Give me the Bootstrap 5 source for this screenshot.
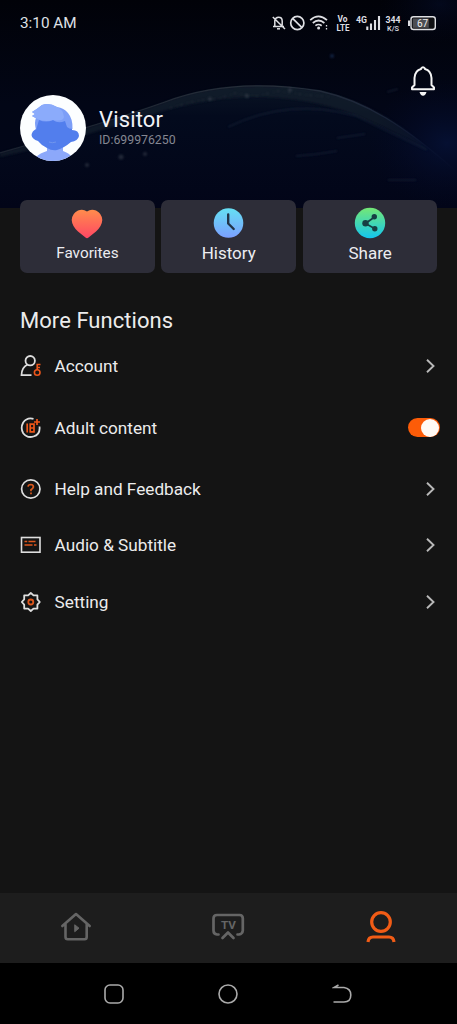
<!DOCTYPE html>
<html lang="en">
<head>
<meta charset="utf-8">
<meta name="viewport" content="width=device-width, initial-scale=1">
<title>Profile</title>
<link rel="stylesheet" href="https://cdn.jsdelivr.net/npm/bootstrap@5.3.0/dist/css/bootstrap.min.css">
<style>
body{background:#141414;color:#ececec;font-family:Roboto,sans-serif;height:1024px;overflow:hidden;line-height:1.2}
svg{display:block;flex:none}
.hero{height:208px;background:#020512}
.hero-art{position:absolute;inset:0}
.hero-body{position:relative}
.status{height:46px;padding:0 20px}
.status-icons{margin-right:-18px}
.clock{font-size:15.3px;color:#dfe0e6;padding-top:1px}
.profile{padding:49px 20px 0}
.who{margin:-1px 0 0 13px}
.visitor{font-size:22px;line-height:26px;letter-spacing:.15px;color:#f2f3f7}
.uid{font-size:12.3px;line-height:15px;letter-spacing:0;color:#858792}
.bell{margin-top:-95px}
.tiles{position:relative;margin-top:-8.5px;padding:0 19.5px 0 20px;gap:6.6px}
.tile{flex:1 1 0;height:73.5px;background:#2d2d38;border-radius:7px;color:#ececf0;font-size:17px;padding-top:7.5px}
.tile-small{font-size:15.3px}
.tile-label{line-height:20px;margin-top:3.5px}
.section-title{font-size:22px;line-height:28px;margin:34px 0 0 20px;letter-spacing:.05px;font-weight:400}
.menu{margin-top:3px}
.menu-row{height:56.5px;padding:0 20px 0 20px;font-size:17.2px}
.menu-row.tall{height:66px}
.menu-label{margin-left:12.6px;padding-top:1px}
.toggle{width:32px;height:19.5px;border-radius:10px;background:#fc5c08;margin-right:-3px;padding:.75px}
.knob{width:18px;height:18px;border-radius:50%;background:#fffaf5}
.tabs{height:70px;background:#1d1d1d}
.sysnav{height:61px;background:#000;gap:94px;padding-right:1px}
</style>
</head>
<body class="d-flex flex-column">
<header class="hero position-relative flex-shrink-0">
<svg class="hero-art" width="457" height="208" viewBox="0 0 457 208">
<defs>
<linearGradient id="sky" x1="0" y1="0" x2="0" y2="1"><stop offset="0" stop-color="#010208"/><stop offset=".5" stop-color="#020616"/><stop offset="1" stop-color="#02061a"/></linearGradient>
<radialGradient id="glow"><stop offset="0" stop-color="#061238" stop-opacity=".8"/><stop offset="1" stop-color="#030824" stop-opacity="0"/></radialGradient>
<linearGradient id="globe" x1="0" y1="0" x2="0" y2="1"><stop offset="0" stop-color="#0a1424"/><stop offset=".25" stop-color="#030a1d"/><stop offset="1" stop-color="#020518"/></linearGradient>
<linearGradient id="rim" x1="0" y1="0" x2="1" y2="0"><stop offset="0" stop-color="#1b2230"/><stop offset=".6" stop-color="#272f3a"/><stop offset=".85" stop-color="#1a253a"/><stop offset="1" stop-color="#1c2840" stop-opacity="0"/></linearGradient>
<filter id="soft"><feGaussianBlur stdDeviation="1"/></filter>
</defs>
<rect width="457" height="208" fill="url(#sky)"/>
<ellipse cx="440" cy="4" rx="60" ry="38" fill="url(#glow)" opacity=".5"/>
<path d="M0 153C70 133 120 118 165 102C215 83 270 83 320 91C365 101 405 126 457 172V208H0Z" fill="url(#globe)"/>
<path d="M0 153C70 133 120 118 165 102C215 83 270 83 320 91C365 101 400 122 430 151C390 130 350 110 315 103C255 91 210 99 170 109C110 127 60 144 0 157Z" fill="#19212d" opacity=".6" filter="url(#soft)"/>
<path d="M0 153C70 133 120 118 165 102C215 83 270 83 320 91C365 101 405 126 457 172" fill="none" stroke="url(#rim)" stroke-width="1.3"/>
<ellipse cx="447" cy="143" rx="78" ry="65" fill="url(#glow)"/>
<g fill="none" stroke="#263247" stroke-width=".9" opacity=".8" filter="url(#soft)"><path d="M228 127Q290 97 356 116L427 150"/><path d="M296 156Q315 155 337 151M388 180H416M337 138L365 134M387 92L398 89"/></g>
<g fill="#49515c" opacity=".45" filter="url(#soft)"><circle cx="121" cy="157" r="2.5"/><circle cx="145" cy="154" r="2"/><circle cx="87" cy="165" r="2"/><circle cx="210" cy="99" r="2"/><circle cx="247" cy="96" r="2"/><circle cx="290" cy="90" r="2"/><circle cx="332" cy="56" r="2" fill="#24447c"/></g>
<path d="M170 108L195 101L218 99L235 93L257 96L278 91L306 95L331 97" fill="none" stroke="#3a414a" stroke-width="1.4" stroke-dasharray="2 5 1 3" opacity=".45" filter="url(#soft)"/>
</svg>
<div class="hero-body">
<div class="status d-flex align-items-center justify-content-between">
<span class="clock">3:10 AM</span>
<svg class="status-icons" width="195" height="40" viewBox="260 3 195 40" fill="none" stroke="#dedfe3" stroke-width="1.5" font-family="Roboto,sans-serif">
<path d="M273 26.500H284M274.800 26V20.500Q275.500 17.300 278.500 17.300Q282.200 17.300 282.200 21V25.500M272.800 17L285 29"/><path d="M277 28.800H280"/>
<circle cx="297.300" cy="23" r="6.600" stroke-width="1.700"/><path d="M292.600 18.300L302 27.700" stroke-width="1.700"/>
<path d="M310.200 20.200Q318.500 12.700 327 20.200M312.800 23Q318.500 18 324.400 23M315.400 25.700Q318.500 23.300 321.700 25.700" stroke-width="1.700"/><circle cx="318.600" cy="28" r="1.500" fill="#dedfe3" stroke="none"/><path d="M326.500 25V26.500M326.500 28V29.500" stroke-width="1.300"/>
<g fill="#dedfe3" stroke="none" font-weight="700"><text x="337.500" y="22.300" font-size="8.800" textLength="10" lengthAdjust="spacingAndGlyphs">Vo</text><text x="336.500" y="30.500" font-size="9" textLength="13" lengthAdjust="spacingAndGlyphs">LTE</text><text x="356" y="22.600" font-size="9" textLength="11" lengthAdjust="spacingAndGlyphs">4G</text><text x="385.500" y="22.700" font-size="9" textLength="15" lengthAdjust="spacingAndGlyphs">344</text><text x="387" y="30.500" font-size="8" font-weight="500" textLength="12" lengthAdjust="spacingAndGlyphs">K/S</text></g>
<path d="M367.300 26.500V30M371 23.500V30M375 20V30M379 16V30" stroke-width="2.100"/>
<path d="M409 20.500V26" stroke-width="2"/><rect x="411" y="16.800" width="24.300" height="12.700" rx="2.500" fill="#101114" stroke-width="1.400"/><rect x="412.800" y="18.500" width="16" height="9.300" fill="#4c4d52" stroke="none"/><text x="417" y="26.700" font-size="10" fill="#eee" stroke="none" textLength="11">67</text>
</svg>
</div>
<div class="profile d-flex align-items-center">
<svg width="66" height="66" viewBox="0 0 66 66"><defs><clipPath id="face"><circle cx="33" cy="33" r="33"/></clipPath></defs><g clip-path="url(#face)"><rect width="66" height="66" fill="#fcfeff"/><path d="M16 62Q20 58 27 56V52H43V56Q49 58 52 62V66H16Z" fill="#8ca8fa"/><path d="M16 25L45 20L52 28V35Q59 35 59 41Q58 46 51 47Q44 53 37 55Q32 56 27 53Q21 50 18 46Q12 44 11.500 40Q12 36 16 34Z" fill="#527eed"/><path d="M12 21L15 19L12 17Q17 14 22 10Q29 7 37 12Q44 13 48 18Q53 24 52.500 34Q49 34 47 32L45 26Q38 29 33 25Q26 28 19 25L16 35Q14 27 16 23Z" fill="#7c9ef7"/><path d="M12 21L15 19L12 17Q17 14 22 10Q29 7 37 12Q43 14 44 22Q43 27 33 25Q22 28 12 21Z" fill="#8babfb"/><path d="M29 47Q32 48.500 36 47" fill="none" stroke="#7095ed"/></g></svg>
<div class="who"><div class="visitor">Visitor</div><div class="uid">ID:699976250</div></div>
<svg class="bell ms-auto" width="28" height="32" viewBox="409 65 28 32" fill="none" stroke="#f5f5f5" stroke-width="2" stroke-linejoin="round"><path d="M414.500 85V78Q415 70.500 421 69V68.500Q423 66 425 68.500V69Q431 70.500 431.500 78V85L434 87.500V89.300H412V87.500Z"/><path d="M419.500 92H426.500Q425.500 95.700 423 95.700Q420.500 95.700 419.500 92Z" fill="#f5f5f5" stroke="none"/></svg>
</div>
</div>
</header>
<section class="tiles d-flex flex-shrink-0">
<div class="tile tile-small d-flex flex-column align-items-center"><svg width="32" height="32" viewBox="0 0 32 32"><defs><linearGradient id="love" x1="0" y1="0" x2="0" y2="1"><stop stop-color="#ff8c4c"/><stop offset="1" stop-color="#ff4764"/></linearGradient></defs><path d="M16 4.500Q20 1.500 25 3.500Q31 6.500 31.300 13Q31 19 25 24.500L17.500 30.500Q16 31.800 14.500 30.500L7 24.500Q1 19 .7 13Q1 6.500 7 3.500Q12 1.500 16 4.500Z" fill="url(#love)"/></svg><div class="tile-label">Favorites</div></div>
<div class="tile d-flex flex-column align-items-center"><svg width="31" height="32" viewBox="0 0 31 32"><defs><linearGradient id="time" x1="0" y1="0" x2="0" y2="1"><stop stop-color="#65e0f3"/><stop offset="1" stop-color="#7b9fff"/></linearGradient></defs><circle cx="15.500" cy="16" r="14.800" fill="url(#time)"/><path d="M15.200 7.500V16.500L20.700 22" fill="none" stroke="#223346" stroke-width="2.400" stroke-linecap="round" stroke-linejoin="round"/></svg><div class="tile-label">History</div></div>
<div class="tile d-flex flex-column align-items-center"><svg width="32" height="32" viewBox="0 0 32 32"><defs><linearGradient id="send" x1="0" y1="0" x2="0" y2="1"><stop stop-color="#74e875"/><stop offset="1" stop-color="#13c6ef"/></linearGradient></defs><circle cx="16" cy="16" r="15.200" fill="url(#send)"/><path d="M20.500 10L11.500 16.500L20.500 21.500" fill="none" stroke="#173f43" stroke-width="1.700"/><g fill="#173f43"><circle cx="20.300" cy="9.700" r="2.700"/><circle cx="11.500" cy="16.300" r="3.200"/><circle cx="20.800" cy="21.700" r="2.700"/></g></svg><div class="tile-label">Share</div></div>
</section>
<h1 class="section-title flex-shrink-0">More Functions</h1>
<main class="menu flex-grow-1">
<div class="menu-row d-flex align-items-center"><svg width="22" height="22" viewBox="0 0 22 22" fill="none" stroke="#dedede" stroke-width="1.800"><circle cx="10.200" cy="5.700" r="4.700"/><path d="M7.500 9.500Q1.500 12.500 1.500 20.200H11.500"/><g stroke="#ed561b" stroke-width="1.600"><circle cx="17.200" cy="17.500" r="2.800"/><path d="M17.200 15V9.500H20.500M17.200 12.500H20"/></g></svg><span class="menu-label">Account</span><svg class="ms-auto" width="13" height="16" viewBox="0 0 13 16"><path d="M3 1.800L9.500 8L3 14.200" fill="none" stroke="#b9b9b9" stroke-width="1.900"/></svg></div>
<div class="menu-row tall d-flex align-items-center"><svg width="22" height="22" viewBox="0 0 22 22" fill="none" stroke="#dedede" stroke-width="1.800"><path d="M13.500 1.800Q7 0 3.200 5.500Q.2 11 3.200 16.200Q7 21.300 13.500 19.500Q20.500 17.500 19.500 9.500"/><g stroke="#ee5618" stroke-width="1.700"><path d="M7.200 6.500V15.500M17 2V8M14 5H20"/><path d="M10.200 7.200H14V11H10.200ZM10.200 11H14V14.800H10.200Z"/></g></svg><span class="menu-label">Adult content</span><div class="toggle ms-auto d-flex justify-content-end"><div class="knob"></div></div></div>
<div class="menu-row d-flex align-items-center"><svg width="22" height="22" viewBox="0 0 22 22" fill="none" stroke="#dedede" stroke-width="1.700"><circle cx="10.800" cy="11" r="9.200"/><path d="M8 8.700Q8.300 6.500 10.800 6.500Q13.500 6.700 13.400 9Q13 10.500 11 11.700V13.300M11 14.500V16.300" stroke="#dc5a1d" stroke-width="1.700"/></svg><span class="menu-label">Help and Feedback</span><svg class="ms-auto" width="13" height="16" viewBox="0 0 13 16"><path d="M3 1.800L9.500 8L3 14.200" fill="none" stroke="#b9b9b9" stroke-width="1.900"/></svg></div>
<div class="menu-row d-flex align-items-center"><svg width="22" height="22" viewBox="0 0 22 22" fill="none" stroke="#dedede" stroke-width="1.600"><rect x="1.500" y="3.500" width="18.500" height="14.700"/><path d="M4.500 7.500H7.200M8.500 7.500H15.500M4.500 11H12.500M14 11H16.500" stroke="#dd561c" stroke-width="1.700"/></svg><span class="menu-label">Audio &amp; Subtitle</span><svg class="ms-auto" width="13" height="16" viewBox="0 0 13 16"><path d="M3 1.800L9.500 8L3 14.200" fill="none" stroke="#b9b9b9" stroke-width="1.900"/></svg></div>
<div class="menu-row d-flex align-items-center"><svg width="22" height="22" viewBox="0 0 22 22" fill="none" stroke="#dedede" stroke-width="1.800" stroke-linejoin="round"><path d="M10.800 2L13.500 4.400H17.400V8.300L19.800 11L17.400 13.700V17.600H13.500L10.800 20L8.100 17.600H4.200V13.700L1.800 11L4.200 8.300V4.400H8.100Z"/><circle cx="10.800" cy="11" r="2.500" stroke="#dd561c" stroke-width="1.800"/></svg><span class="menu-label">Setting</span><svg class="ms-auto" width="13" height="16" viewBox="0 0 13 16"><path d="M3 1.800L9.500 8L3 14.200" fill="none" stroke="#b9b9b9" stroke-width="1.900"/></svg></div>
</main>
<nav class="tabs row g-0 flex-shrink-0">
<div class="col d-flex justify-content-center align-items-center"><svg width="34" height="34" viewBox="0 0 34 34" fill="none" stroke="#656565" stroke-width="2.600" stroke-linecap="round" stroke-linejoin="round"><path d="M3.300 15L17 3L30.700 15M6.500 13V26Q6.500 28.300 8.800 28.300H25.500Q27.700 28.300 27.700 26V13"/><path d="M16 14L20 17.200L16 20.500Z" fill="#656565" stroke-width="1"/></svg></div>
<div class="col d-flex justify-content-center align-items-center"><svg width="36" height="34" viewBox="0 0 36 34" fill="none" stroke="#656565" stroke-width="2.700" stroke-linecap="round" stroke-linejoin="round"><path d="M8.500 23.500H7Q3.500 23 3.500 19.500V7.500Q3.500 4 7 4H29.500Q32.800 4 32.800 7.500V19.500Q32.500 23 29 23.500H27.500M12.500 27L18 21.500L23.500 27"/><text x="11" y="17.500" fill="#656565" stroke="none" font-family="Roboto,sans-serif" font-weight="700" font-size="10.500" textLength="15" lengthAdjust="spacingAndGlyphs">TV</text></svg></div>
<div class="col d-flex justify-content-center align-items-center"><svg width="34" height="36" viewBox="0 0 34 36" fill="none" stroke="#f25c16" stroke-width="3.200"><circle cx="17" cy="12" r="9.300"/><path d="M4 32Q4.500 27 9 27H25Q29.500 27 30 32"/></svg></div>
</nav>
<footer class="sysnav d-flex justify-content-center align-items-center flex-shrink-0">
<svg width="20" height="20" viewBox="0 0 20 20"><rect x="1" y="1" width="18" height="18" rx="5" fill="none" stroke="#aaa" stroke-width="1.600"/></svg>
<svg width="20" height="20" viewBox="0 0 20 20"><circle cx="10" cy="10" r="9" fill="none" stroke="#aaa" stroke-width="1.600"/></svg>
<svg width="20" height="20" viewBox="0 0 20 20"><path d="M6.500 1L2 3.500H12Q18.800 4.500 18.800 11Q18.800 18 12 18H1.500" fill="none" stroke="#aaa" stroke-width="1.600"/></svg>
</footer>
<script src="https://cdn.jsdelivr.net/npm/bootstrap@5.3.0/dist/js/bootstrap.bundle.min.js"></script>
</body>
</html>
